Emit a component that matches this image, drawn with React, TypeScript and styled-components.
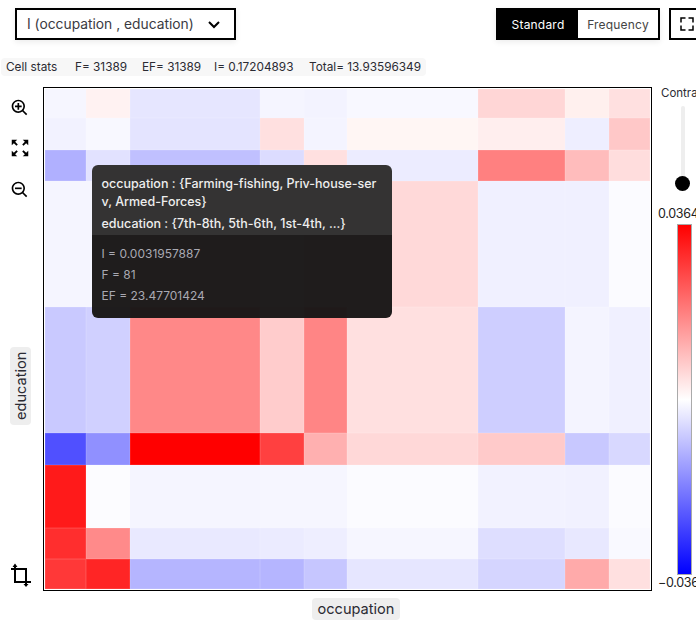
import React, {FC} from 'react';
import styled, {createGlobalStyle} from 'styled-components';
import {BiZoomIn, BiZoomOut, BiChevronDown, BiFullscreen} from 'react-icons/bi';
import {MdZoomOutMap} from 'react-icons/md';

const GlobalStyle = createGlobalStyle`
  html, body {
    margin: 0;
    padding: 0;
    background: #fff;
    overflow: hidden;
  }
  body {
    font-family: Inter, "Noto Sans", "Liberation Sans", sans-serif;
    color: #2b2b33;
  }
`

const colWidths = [41.5, 43.5, 130, 44, 43.5, 130.5, 87, 44, 41]
const rowHeights = [29.5, 31.5, 31.5, 126, 126, 31.5, 63, 31.5, 29.5]

const heatmap: string[][] = [
    ['#f6f6ff', '#fff2f2', '#e6e6ff', '#f5f5ff', '#f3f3ff', '#f8f8ff', '#ffd6d6', '#fff0ee', '#ffe0e0'],
    ['#f2f2ff', '#f8f8ff', '#e4e4ff', '#ffe0e0', '#f4f4ff', '#fff6f4', '#ffeeee', '#eeeeff', '#ffc8c8'],
    ['#b0b0ff', '#e2e2ff', '#c0c0ff', '#dcdcff', '#ffe0e0', '#ececff', '#ff8080', '#ffbcbc', '#ffdddd'],
    ['#f5f5ff', '#f5f5ff', '#ffdada', '#fff4f4', '#ffdada', '#ffd9d9', '#f0f0ff', '#f0f0ff', '#fbfbff'],
    ['#c9c9ff', '#d0d0ff', '#ff8888', '#ffcccc', '#ff8585', '#ffe0e0', '#ceceff', '#f4f4ff', '#f0f0ff'],
    ['#5050ff', '#9090ff', '#ff0000', '#ff4040', '#ffb0b0', '#ffd8d8', '#ffcaca', '#c8c8ff', '#d8d8ff'],
    ['#ff1a1a', '#fcfcff', '#f5f5ff', '#f6f6ff', '#f6f6ff', '#fbfbff', '#f2f2ff', '#f1f1ff', '#fbfbff'],
    ['#ff2e2e', '#ff8a8a', '#e9e9ff', '#ebebff', '#eeeeff', '#f6f6ff', '#dedeff', '#e8e8ff', '#f9f9ff'],
    ['#ff3838', '#ff2525', '#b5b5ff', '#b5b5ff', '#c6c6ff', '#e6e6ff', '#d5d5ff', '#ffaaaa', '#ffe0e0'],
]

const CropIcon: FC = () => (
    <svg width="24" height="24" viewBox="0 0 24 24" fill="none">
        <path d="M7 3V19H23M3 6H18V22" stroke="#000" strokeWidth="2"/>
        <path d="M4.5 4L7 0.5L9.5 4ZM15.5 21L18 24L20.5 21Z" fill="#000"/>
    </svg>
)

const App: FC = () => {
    return (
        <Page>
            <GlobalStyle/>
            <Toolbar>
                <Dropdown>
                    <span>I (occupation , education)</span>
                    <BiChevronDown size={24} color="#000"/>
                </Dropdown>
                <ToolbarRight>
                    <Toggle>
                        <ToggleOption $active>Standard</ToggleOption>
                        <ToggleOption>Frequency</ToggleOption>
                    </Toggle>
                    <FullscreenButton>
                        <BiFullscreen size={18} color="#000"/>
                    </FullscreenButton>
                </ToolbarRight>
            </Toolbar>

            <Stats>
                <StatTitle>Cell stats</StatTitle>
                <Stat $width={67}>F= 31389</Stat>
                <Stat $width={72}>EF= 31389</Stat>
                <Stat $width={95}>I= 0.17204893</Stat>
                <span>Total= 13.93596349</span>
            </Stats>

            <Main>
                <Rail>
                    <RailIcon $top={11}><BiZoomIn size={20}/></RailIcon>
                    <RailIcon $top={19}><MdZoomOutMap size={22}/></RailIcon>
                    <RailIcon $top={21}><BiZoomOut size={20}/></RailIcon>
                    <YLabel>education</YLabel>
                    <RailIcon $top={138}><CropIcon/></RailIcon>
                </Rail>

                <Plot>
                    <Grid>
                        {heatmap.map((row, r) => row.map((color, c) => <Cell key={r + '-' + c} $color={color}/>))}
                    </Grid>
                    <Tooltip>
                        <TooltipHead>
                            <TooltipTitle>occupation : {'{'}Farming-fishing, Priv-house-ser<br/>v, Armed-Forces{'}'}</TooltipTitle>
                            <TooltipTitle>education : {'{'}7th-8th, 5th-6th, 1st-4th, ...{'}'}</TooltipTitle>
                        </TooltipHead>
                        <TooltipBody>
                            <TooltipValue>I = 0.0031957887</TooltipValue>
                            <TooltipValue>F = 81</TooltipValue>
                            <TooltipValue>EF = 23.47701424</TooltipValue>
                        </TooltipBody>
                    </Tooltip>
                </Plot>

                <Legend>
                    <ContrastLabel>Contrast</ContrastLabel>
                    <SliderTrack>
                        <SliderThumb/>
                    </SliderTrack>
                    <LegendValue $top={22}>0.03642</LegendValue>
                    <ColorBar/>
                    <LegendValue $top={0}>−0.03642</LegendValue>
                </Legend>
            </Main>

            <XAxis>
                <AxisLabel>occupation</AxisLabel>
            </XAxis>
        </Page>
    );
};

export default App;


const Page = styled.div`
  width: 696px;
  height: 625px;
  overflow: hidden;
`
const Toolbar = styled.div`
  display: flex;
  justify-content: space-between;
  padding: 8px 0 0 15px;
  width: 704px;
  box-sizing: border-box;
`
const Dropdown = styled.div`
  width: 221px;
  height: 32px;
  box-sizing: border-box;
  border: 2px solid #000;
  box-shadow: 0 2px 6px rgba(0, 0, 0, 0.08);
  display: flex;
  align-items: center;
  gap: 8px;
  padding-left: 10px;
  font-size: 13.8px;
  white-space: nowrap;
  color: #3a3a42;
`
const ToolbarRight = styled.div`
  display: flex;
  gap: 9px;
`
const Toggle = styled.div`
  display: flex;
  width: 164px;
  height: 32px;
  box-sizing: border-box;
  border: 2px solid #000;
  box-shadow: 0 2px 6px rgba(0, 0, 0, 0.08);
`
const ToggleOption = styled.div<{$active?: boolean}>`
  flex: 1;
  display: flex;
  align-items: center;
  justify-content: center;
  font-size: 12px;
  letter-spacing: 0.2px;
  background: ${props => props.$active ? '#000' : '#fff'};
  color: ${props => props.$active ? '#fff' : '#444'};
`
const FullscreenButton = styled.div`
  width: 35px;
  height: 32px;
  box-sizing: border-box;
  border: 2px solid #000;
  display: flex;
  align-items: center;
  justify-content: center;
`
const Stats = styled.div`
  display: inline-flex;
  align-items: center;
  height: 18px;
  width: 425px;
  box-sizing: border-box;
  margin: 18px 0 0 1px;
  padding-left: 5px;
  background: #f7f7f7;
  border-radius: 4px;
  font-size: 11.8px;
  white-space: nowrap;
`
const StatTitle = styled.span`
  width: 69px;
`
const Stat = styled.span<{$width: number}>`
  width: ${props => props.$width}px;
`
const Main = styled.div`
  display: flex;
  margin-top: 11px;
`
const Rail = styled.div`
  width: 43px;
  flex-shrink: 0;
  display: flex;
  flex-direction: column;
`
const RailIcon = styled.div<{$top: number}>`
  display: flex;
  justify-content: center;
  width: 40px;
  margin-top: ${props => props.$top}px;
  color: #000;
`
const AxisLabel = styled.div`
  background: #eee;
  border-radius: 4px;
  font-size: 14.6px;
  line-height: 22px;
  padding: 0 5px;
  color: #2b2b33;
`
const YLabel = styled(AxisLabel)`
  writing-mode: vertical-rl;
  transform: rotate(180deg);
  margin: 147px 0 0 10px;
  width: 21px;
  height: 78px;
  padding: 0;
  text-align: center;
  box-sizing: border-box;
`
const Plot = styled.div`
  position: relative;
  flex-shrink: 0;
  width: 609px;
  height: 504px;
  box-sizing: border-box;
  border: 1.5px solid #000;
  padding: 0.5px 0 0 0.5px;
`
const Grid = styled.div`
  display: grid;
  grid-template-columns: ${colWidths.map(w => w + 'px').join(' ')};
  grid-template-rows: ${rowHeights.map(h => h + 'px').join(' ')};
`
const Cell = styled.div<{$color: string}>`
  background: ${props => props.$color};
  box-shadow: inset 0 0 0 0.5px rgba(255, 255, 255, 0.18);
`
const Tooltip = styled.div`
  position: absolute;
  left: 47.5px;
  top: 76.5px;
  width: 300px;
  height: 153px;
  border-radius: 6px;
  overflow: hidden;
  display: flex;
  flex-direction: column;
  font-size: 12px;
`
const TooltipHead = styled.div`
  height: 70px;
  box-sizing: border-box;
  padding: 10px 10px 0;
  background: rgba(48, 47, 47, 0.98);
  color: #eee;
  font-size: 12.5px;
  font-weight: 500;
  display: flex;
  flex-direction: column;
  gap: 4px;
`
const TooltipTitle = styled.div`
  line-height: 18px;
  white-space: nowrap;
`
const TooltipBody = styled.div`
  flex: 1;
  box-sizing: border-box;
  padding: 10px 10px 0;
  background: rgba(24, 22, 22, 0.97);
  color: #a9a9b2;
  display: flex;
  flex-direction: column;
  gap: 3px;
`
const TooltipValue = styled.div`
  line-height: 18px;
`
const Legend = styled.div`
  width: 60px;
  flex-shrink: 0;
  padding-left: 9px;
  display: flex;
  flex-direction: column;
  font-size: 12.5px;
  letter-spacing: -0.3px;
  white-space: nowrap;
`
const ContrastLabel = styled.div`
  font-size: 11.5px;
  letter-spacing: 0;
  line-height: 12px;
`
const SliderTrack = styled.div`
  position: relative;
  width: 4px;
  height: 78px;
  margin: 7px 0 0 20px;
  background: #eee;
  border-radius: 2px;
`
const SliderThumb = styled.div`
  position: absolute;
  left: -6px;
  bottom: -7px;
  width: 15px;
  height: 15px;
  border-radius: 50%;
  background: #000;
`
const LegendValue = styled.div<{$top: number}>`
  line-height: 16px;
  margin: ${props => props.$top}px 0 0 -3px;
  color: #222;
`
const ColorBar = styled.div`
  width: 15px;
  height: 351px;
  box-sizing: border-box;
  margin: 2px 0 0 16px;
  border: 1px solid #aaa;
  background: linear-gradient(#f00, #fff 50%, #00f);
`
const XAxis = styled.div`
  width: 712px;
  display: flex;
  justify-content: center;
  margin-top: 7px;
`
